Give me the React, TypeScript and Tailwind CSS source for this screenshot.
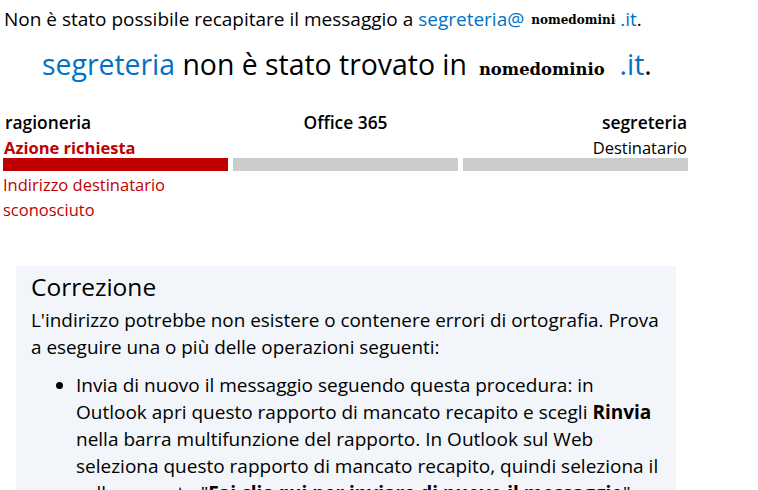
import React from 'react';

const BODY_FONT = "font-['Open_Sans','Noto_Sans',sans-serif]";

function DomainImage({ className }: { className: string }) {
  return <span className={`inline-block font-['DejaVu_Serif',serif] font-bold text-black ${className}`}>nomedominio</span>;
}

export default function App() {
  return (
    <div className={`h-[490px] overflow-hidden bg-white text-black ${BODY_FONT}`}>
      <p className="pl-[4px] pt-[7px] text-[19px] leading-[25px] whitespace-nowrap">
        Non è stato possibile recapitare il messaggio a <span className="text-[#0072c6]">segreteria@</span>
        <DomainImage className="ml-[7px] mr-[4px] h-[12px] w-[85px] overflow-hidden align-[0px] text-[12px] leading-[12px]" />
        <span className="text-[#0072c6]">.it</span>.
      </p>

      <p className="mt-[14px] pl-[42px] text-[28.4px] leading-[36px] whitespace-nowrap">
        <span className="text-[#0072c6]">segreteria</span> non è stato trovato in
        <DomainImage className="ml-[12px] mr-[15px] text-[16.4px] leading-none" />
        <span className="text-[#0072c6]">.it</span>.
      </p>

      <div className="mt-[28px] ml-[3px] grid w-[685px] grid-cols-[225px_225px_225px] gap-x-[5px] text-[16.5px]">
        <div className="pl-[2px] text-[17.4px] font-semibold leading-[25px]">ragioneria</div>
        <div className="text-center text-[17.4px] font-semibold leading-[25px]">Office 365</div>
        <div className="pr-[1px] text-right text-[17.4px] font-semibold leading-[25px]">segreteria</div>
        <div className="pl-[1px] font-bold leading-[25px] text-[#c00000]">Azione richiesta</div>
        <div />
        <div className="pr-[1px] text-right leading-[25px]">Destinatario</div>
        <div className="-mt-[2px] h-[13px] bg-[#c00000]" />
        <div className="-mt-[2px] h-[13px] bg-[#cccccc]" />
        <div className="-mt-[2px] h-[13px] bg-[#cccccc]" />
        <div className="pt-[1px] leading-[25px] text-[#c00000]">Indirizzo destinatario sconosciuto</div>
      </div>

      <div className="ml-[16px] mt-[44px] w-[660px] bg-[#f2f5fa] pl-[15px] pr-[10px] pt-[5px]">
        <h2 className="text-[24.5px] leading-[32px]">Correzione</h2>
        <p className="mt-[4px] text-[18.9px] leading-[27px]">
          L'indirizzo potrebbe non esistere o contenere errori di ortografia. Prova a eseguire una o più delle operazioni seguenti:
        </p>
        <ul className="mt-[11px] list-disc pl-[45px] pr-[5px] text-[19px] leading-[27px]">
          <li>
            Invia di nuovo il messaggio seguendo questa procedura: in Outlook apri questo rapporto di mancato recapito e scegli <b>Rinvia</b> nella barra multifunzione del rapporto. In Outlook sul Web seleziona questo rapporto di mancato recapito, quindi seleziona il collegamento "<b>Fai clic qui per inviare di nuovo il messaggio</b>".
          </li>
        </ul>
      </div>
    </div>
  );
}
